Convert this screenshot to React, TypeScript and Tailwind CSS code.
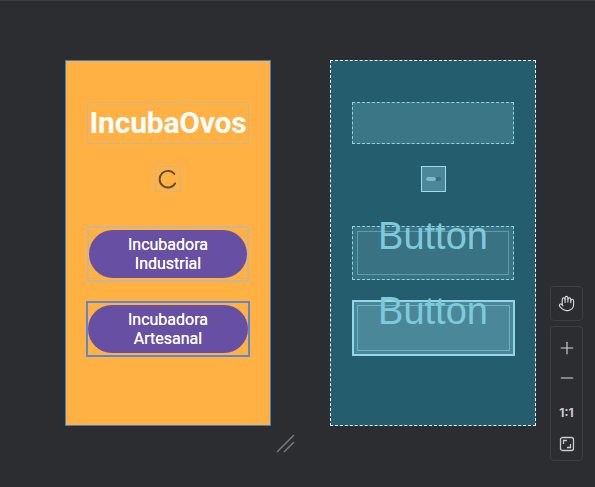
import React from 'react';
import { Hand, Plus, Minus } from 'lucide-react';

const Spinner: React.FC = () => (
    <svg width="20" height="20" viewBox="0 0 20 20">
        <path d="M16.4 5 A8.3 8.3 0 1 0 17.1 14.4" fill="none" stroke="#5b4a3c" strokeWidth="1.9" strokeLinecap="round" />
    </svg>
);

const FitIcon: React.FC = () => (
    <svg width="16" height="16" viewBox="0 0 16 16" fill="none" stroke="#c9cbd0" strokeWidth="1.3">
        <rect x="1.5" y="1.5" width="13" height="13" rx="2" />
        <path d="M4.5 8 V4.5 H8" />
        <path d="M11.5 8 V11.5 H8" />
    </svg>
);

const DesignPhone: React.FC = () => (
    <div className="w-[206px] h-[366px] bg-[#ffb143] border border-[#3d7fc4] flex flex-col items-center pt-[41px]" style={{ fontFamily: 'Roboto, "Noto Sans", sans-serif' }}>
        <div className="w-[162px] h-[42px] border border-[#cdb590] flex items-center justify-center">
            <span className="text-white font-bold text-[30px] leading-none tracking-[-0.2px]">IncubaOvos</span>
        </div>
        <div className="mt-[22px] w-[26px] h-[26px] border border-[#cdb590] flex items-center justify-center">
            <Spinner />
        </div>
        <div className="mt-[34px] w-[162px] h-[56px] border-2 border-[#ccb595] flex items-center justify-center">
            <div className="w-[160px] h-[48px] rounded-full bg-[#6750a4] flex items-center justify-center text-center text-white font-normal text-[16px] leading-[19px] [text-shadow:0_0_0.4px_white]">
                Incubadora<br />Industrial
            </div>
        </div>
        <div className="mt-[19px] w-[164px] h-[56px] border-2 border-[#5c86d6] flex items-center justify-center">
            <div className="w-[160px] h-[48px] rounded-full bg-[#6750a4] flex items-center justify-center text-center text-white font-normal text-[16px] leading-[19px] [text-shadow:0_0_0.4px_white]">
                Incubadora<br />Artesanal
            </div>
        </div>
    </div>
);

const BlueprintButton: React.FC<{ selected?: boolean }> = ({ selected }) => (
    <div className={selected
        ? 'relative w-[163px] h-[56px] border-2 border-[#93d6e8] bg-[#4a8899]'
        : 'relative w-[162px] h-[54px] border border-dashed border-[#8fd4e8] bg-[#397282]'}>
        <div className={selected
            ? 'absolute inset-[3px] border border-[#6fb2c3]'
            : 'absolute inset-[4px] border border-[#5e9eaf]'} />
        <div className="absolute left-0 right-0 top-[-10px] text-center text-[#7ecadd] text-[38px] leading-none" style={{ fontFamily: '"Liberation Sans", Arial, sans-serif' }}>
            Button
        </div>
    </div>
);

const BlueprintPhone: React.FC = () => (
    <div className="w-[206px] h-[366px] bg-[#245d6e] border border-dashed border-[#e6f4f8] flex flex-col items-center pt-[41px]">
        <div className="w-[162px] h-[42px] border border-dashed border-[#8fd4e8] bg-[#3b7686]" />
        <div className="mt-[22px] w-[25px] h-[26px] border border-[#9cdcec] bg-[#4b8798] flex items-center justify-center">
            <div className="w-[15px] h-[4px] rounded-full bg-[#3a6f7f] flex">
                <div className="w-[10px] h-[4px] rounded-full bg-[#7fb8c6]" />
            </div>
        </div>
        <div className="mt-[34px]">
            <BlueprintButton />
        </div>
        <div className="mt-[20px]">
            <BlueprintButton selected />
        </div>
    </div>
);

const App: React.FC = () => {
    return (
        <div className="relative w-[595px] h-[487px] bg-[#2b2d30] overflow-hidden border-t border-[#3a3c41]">
            <div className="flex gap-[59px] pl-[65px] pt-[59px]">
                <DesignPhone />
                <BlueprintPhone />
            </div>

            {/* resize handle */}
            <svg className="absolute left-[274px] top-[428px]" width="26" height="26" viewBox="0 0 26 26">
                <path d="M3 23 L20 6" stroke="#7a7c80" strokeWidth="1.4" />
                <path d="M10 23 L20 13" stroke="#7a7c80" strokeWidth="1.4" />
            </svg>

            {/* zoom toolbar */}
            <div className="absolute left-[550px] top-[285px] flex flex-col gap-[5px]">
                <div className="w-[33px] h-[35px] rounded-[4px] border border-[#3c3f44] flex items-center justify-center">
                    <Hand size={17} color="#d6d8dc" strokeWidth={1.6} />
                </div>
                <div className="w-[33px] h-[135px] rounded-[4px] border border-[#3c3f44] flex flex-col items-center pt-[11px]">
                    <Plus size={20} color="#d6d8dc" strokeWidth={1.3} />
                    <div className="mt-[10px]"><Minus size={20} color="#d6d8dc" strokeWidth={1.3} /></div>
                    <div className="mt-[19px] text-[#c9cbd0] text-[12px] font-bold leading-none" style={{ fontFamily: 'Inter, "Noto Sans", sans-serif' }}>1:1</div>
                    <div className="mt-[17px]"><FitIcon /></div>
                </div>
            </div>
        </div>
    );
};

export default App;
